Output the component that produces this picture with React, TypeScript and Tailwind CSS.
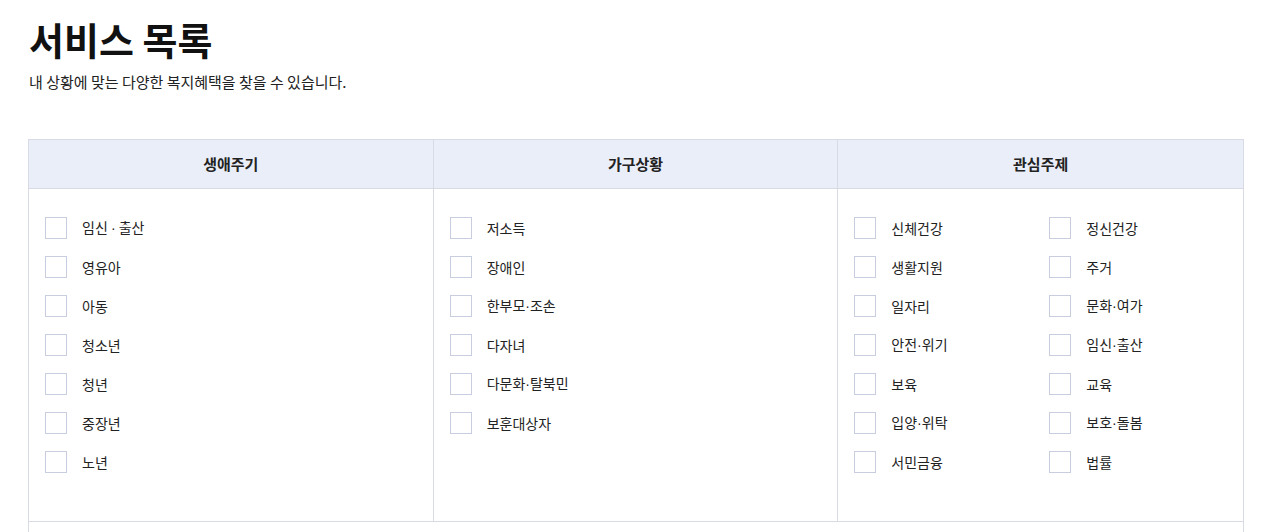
import React from "react";

const lifeCycle = ["임신 · 출산", "영유아", "아동", "청소년", "청년", "중장년", "노년"];
const household = ["저소득", "장애인", "한부모·조손", "다자녀", "다문화·탈북민", "보훈대상자"];
const interests = [
  "신체건강",
  "정신건강",
  "생활지원",
  "주거",
  "일자리",
  "문화·여가",
  "안전·위기",
  "임신·출산",
  "보육",
  "교육",
  "입양·위탁",
  "보호·돌봄",
  "서민금융",
  "법률",
];

// 가운데 점은 CJK 폰트에서 전각으로 나와서 라틴 폰트로 따로 렌더
const Label = ({ text }: { text: string }) => {
  const parts = text.split("·");
  return (
    <span className="text-[14px] text-[#222]">
      {parts.map((p, i) => (
        <React.Fragment key={i}>
          {i > 0 && <span style={{ fontFamily: '"Liberation Sans", sans-serif' }}>·</span>}
          {p}
        </React.Fragment>
      ))}
    </span>
  );
};

const CheckItem = ({ label }: { label: string }) => (
  <label className="flex items-center h-[22px] gap-[15px] cursor-pointer">
    <span className="w-[22px] h-[22px] border border-[#c8cee0] bg-white shrink-0" />
    <Label text={label} />
  </label>
);

export default function App() {
  return (
    <div
      className="bg-white min-h-[532px] px-[28px] pt-[12px] text-[#111]"
      style={{ fontFamily: '"Noto Sans CJK KR", "Noto Sans", sans-serif' }}
    >
      <h1 className="text-[38px] font-bold leading-[54px] ml-[1px]">서비스 목록</h1>
      <p className="text-[15px] leading-[22px] text-[#222] mt-[5px] ml-[1px]">
        내 상황에 맞는 다양한 복지혜택을 찾을 수 있습니다.
      </p>

      <div className="mt-[46px] w-[1216px] border border-[#d8dbe3]">
        <div className="grid grid-cols-3 bg-[#eaeef9] border-b border-[#d8dbe3] h-[49px]">
          {["생애주기", "가구상황", "관심주제"].map((t, i) => (
            <div
              key={t}
              className={`flex items-center justify-center text-[15px] font-bold text-[#222] ${
                i < 2 ? "border-r border-[#d8dbe3]" : ""
              }`}
            >
              {t}
            </div>
          ))}
        </div>
        <div className="grid grid-cols-3 h-[333px] border-b border-[#d8dbe3]">
          <div className="border-r border-[#d8dbe3] pl-[16px] pt-[28px] flex flex-col gap-[17px]">
            {lifeCycle.map((l) => (
              <CheckItem key={l} label={l} />
            ))}
          </div>
          <div className="border-r border-[#d8dbe3] pl-[16px] pt-[28px] flex flex-col gap-[17px]">
            {household.map((l) => (
              <CheckItem key={l} label={l} />
            ))}
          </div>
          <div className="pl-[16px] pt-[28px] grid grid-cols-[195px_1fr] gap-y-[17px] content-start">
            {interests.map((l) => (
              <CheckItem key={l} label={l} />
            ))}
          </div>
        </div>
        <div className="h-[40px]" />
      </div>
    </div>
  );
}
